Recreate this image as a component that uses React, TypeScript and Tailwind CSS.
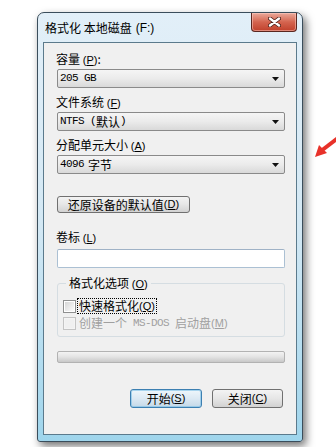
import React from "react";

const cjk = "font-['Noto_Sans_CJK_SC',sans-serif]";
const mono = "font-['Liberation_Mono','Noto_Sans_CJK_SC',monospace] text-[11px] tracking-[-0.6px]";

const Mn = ({ k }: { k: string }) => (
  <span className="font-['Liberation_Sans',sans-serif] text-[11px]">
    (<span className="underline underline-offset-[1px]">{k}</span>)
  </span>
);

const Label = ({ children }: { children: React.ReactNode }) => (
  <div className={`${cjk} text-[12px] leading-[16px] h-[16px] text-black`}>{children}</div>
);

const Combo = ({ children }: { children: React.ReactNode }) => (
  <div className="ml-px mt-[2px] flex h-[19px] w-[228px] items-center justify-between rounded-[2px] border border-[#8a8a8a] bg-gradient-to-b from-[#f5f5f5] via-[#ebebeb] to-[#d9d9d9] pl-[2px] pr-[5px]">
    <span className="flex items-center leading-none text-black">{children}</span>
    <svg width="7" height="4" viewBox="0 0 7 4">
      <path d="M0 0h7L3.5 4z" fill="#111" />
    </svg>
  </div>
);

const Check = ({ disabled }: { disabled?: boolean }) => (
  <div
    className={`flex h-[13px] w-[13px] shrink-0 items-center justify-center border ${
      disabled ? "border-[#c4c4c4] bg-[#f4f4f4]" : "border-[#8e8f8f] bg-white"
    }`}
  >
    <div
      className={`h-[9px] w-[9px] ${
        disabled ? "bg-[#f0f0f0]" : "bg-gradient-to-br from-[#d6d6d6] to-[#fbfbfb]"
      }`}
    />
  </div>
);

export default function App() {
  return (
    <div className="relative h-[447px] w-[336px] overflow-hidden bg-white pl-[37px] pt-[12px]">
      {/* window */}
      <div className="relative flex h-[430px] w-[266px] flex-col rounded-t-[7px] rounded-b-[3px] border border-[#3a4d5b] bg-gradient-to-b from-[#e2eff8] via-[#d3e8f4] to-[#9fd5ec] px-[5px] pb-[6px] shadow-[3px_4px_9px_rgba(0,0,0,0.55)]">
        <div className={`${cjk} flex h-[29px] items-center pl-[2px] text-[12px] text-black`}>
          格式化 本地磁盘 <span className="ml-[4px] font-['Liberation_Sans',sans-serif] text-[12px]">(F:)</span>
        </div>

        {/* close button */}
        <div className="absolute right-[5px] top-0 flex h-[19px] w-[46px] items-center justify-center rounded-b-[4px] border border-t-0 border-[#5a2720] bg-gradient-to-b from-[#e9a99b] via-[#d4644f] to-[#c0402b] shadow-[inset_0_0_0_1px_rgba(255,210,200,0.5)]">
          <svg width="13" height="10" viewBox="0 0 13 10">
            <path d="M2 1.5l9 7M11 1.5l-9 7" stroke="#4a1d16" strokeWidth="4" strokeLinecap="round" />
            <path d="M2 1.5l9 7M11 1.5l-9 7" stroke="#fff" strokeWidth="2.4" strokeLinecap="round" />
          </svg>
        </div>

        {/* client area */}
        <div className="flex flex-1 flex-col border border-[#5b7a8c] bg-[#f0f0f0] pl-[12px] pr-[11px] pt-[8px]">
          <Label>
            容量 <Mn k="P" />:
          </Label>
          <Combo>
            <span className={mono}>205 GB</span>
          </Combo>

          <div className="mt-[6px]">
            <Label>
              文件系统 <Mn k="F" />
            </Label>
          </div>
          <Combo>
            <span className={mono}>NTFS (</span>
            <span className={`${cjk} text-[12px]`}>默认</span>
            <span className={mono}>)</span>
          </Combo>

          <div className="mt-[6px]">
            <Label>
              分配单元大小 <Mn k="A" />
            </Label>
          </div>
          <Combo>
            <span className={mono}>4096 </span>
            <span className={`${cjk} ml-[4px] text-[12px]`}>字节</span>
          </Combo>

          <div
            className={`${cjk} ml-px mt-[22px] flex h-[17px] w-[133px] items-center justify-center rounded-[3px] border border-[#707070] bg-gradient-to-b from-[#f3f3f3] via-[#e6e6e6] to-[#d2d2d2] text-[12px] leading-none text-black`}
          >
            还原设备的默认值 <Mn k="D" />
          </div>

          <div className="mt-[16px]">
            <Label>
              卷标 <Mn k="L" />
            </Label>
          </div>
          <div className="ml-px mt-[4px] h-[19px] w-[228px] rounded-[2px] border border-[#abc0d3] border-t-[#9fb2c6] bg-white" />

          <fieldset className="ml-px mt-[7px] w-[228px] rounded-[3px] border border-[#d5dde2] pb-[5px] pl-[5px]">
            <legend className={`${cjk} ml-[3px] px-[3px] text-[12px] leading-[16px] text-black`}>
              格式化选项 <Mn k="O" />
            </legend>
            <div className="mt-[6px] flex h-[16px] items-center">
              <Check />
              <div
                className={`${cjk} ml-px flex h-[16px] items-center border border-dotted border-black px-px text-[12px] leading-none text-black`}
              >
                快速格式化 <Mn k="Q" />
              </div>
            </div>
            <div className={`${cjk} mt-px flex h-[16px] items-center text-[12px] leading-none text-[#a0a0a0]`}>
              <Check disabled />
              <span className="ml-[3px]">创建一个</span>
              <span className={`${mono} ml-[6px]`}>MS-DOS</span>
              <span className="ml-[6px]">启动盘</span>
              <Mn k="M" />
            </div>
          </fieldset>

          <div className="ml-px mt-[14px] h-[12px] w-[228px] rounded-[2px] border border-[#b2b2b2] bg-gradient-to-b from-[#f3f3f3] via-[#e3e3e3] to-[#c8c8c8]" />

          <div className="mt-[26px] flex w-[229px] justify-end gap-[10px] pr-[2px]">
            <div
              className={`${cjk} flex h-[19px] w-[72px] items-center justify-center rounded-[3px] border border-[#3c7fb1] bg-gradient-to-b from-[#eef6fb] via-[#dce9f3] to-[#c5d9e8] text-[12px] leading-none text-black shadow-[inset_0_0_0_1px_rgba(120,190,230,0.6)]`}
            >
              开始 <Mn k="S" />
            </div>
            <div
              className={`${cjk} flex h-[19px] w-[71px] items-center justify-center rounded-[3px] border border-[#707070] bg-gradient-to-b from-[#f3f3f3] via-[#e6e6e6] to-[#d2d2d2] text-[12px] leading-none text-black`}
            >
              关闭 <Mn k="C" />
            </div>
          </div>
        </div>
      </div>

      {/* red annotation arrow */}
      <svg className="absolute left-[312px] top-[134px]" width="24" height="27" viewBox="0 0 24 27">
        <path d="M26 4L9 17" stroke="#e8322a" strokeWidth="4" />
        <path d="M3 23l4-12 8 8z" fill="#e8322a" />
      </svg>
    </div>
  );
}
